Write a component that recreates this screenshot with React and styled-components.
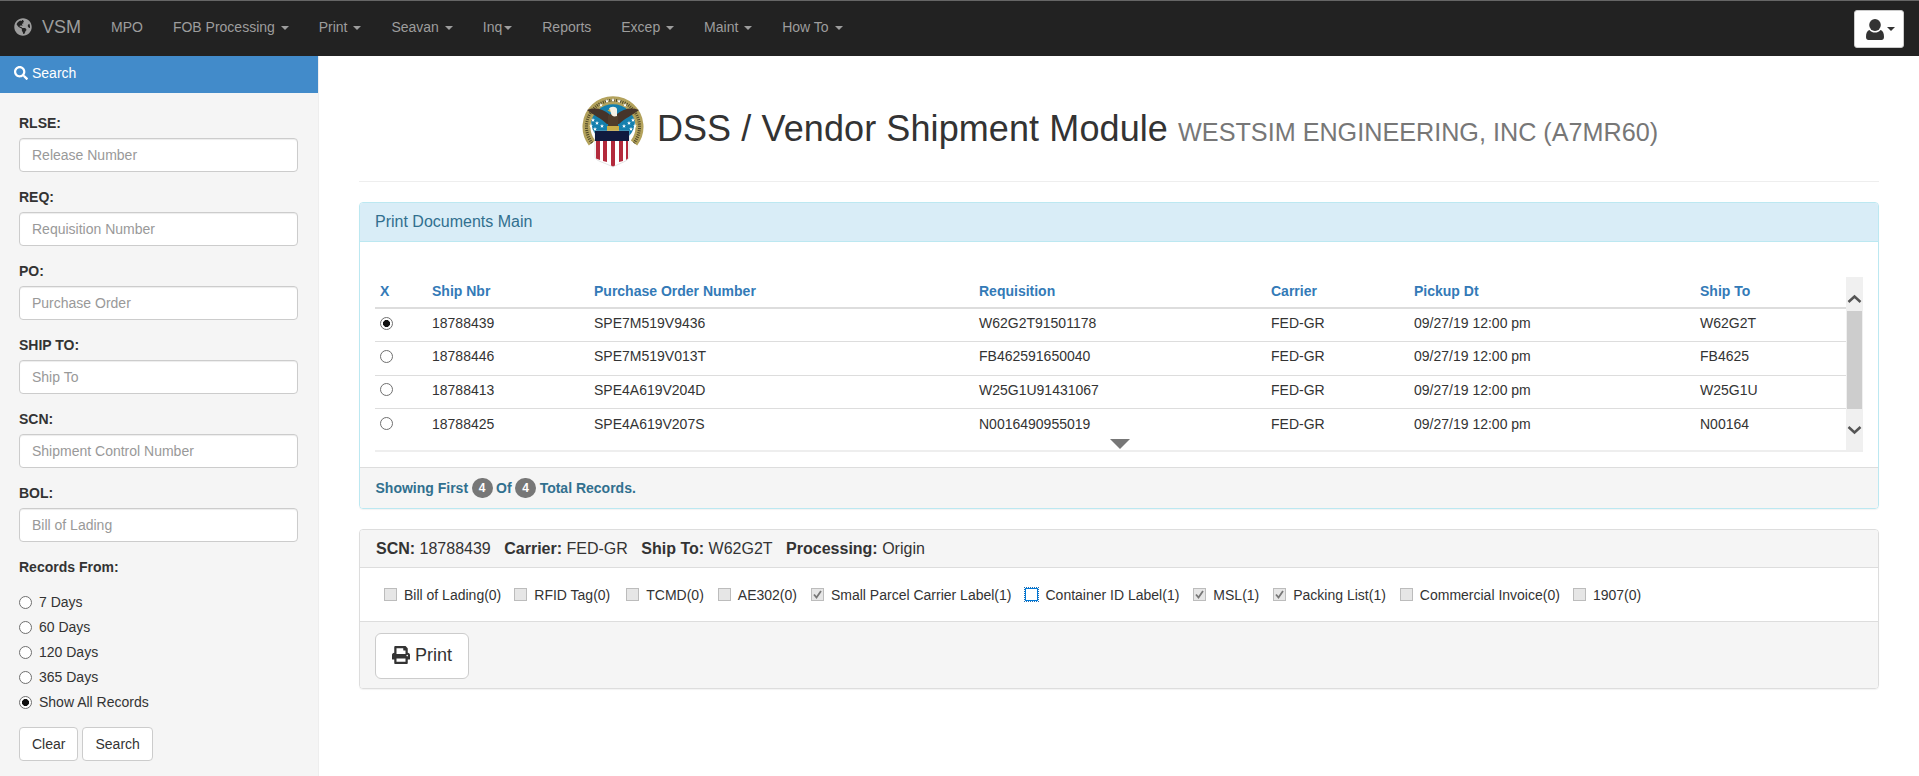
import React from "react";
import styled, { createGlobalStyle } from "styled-components";
import { FaGlobeAmericas, FaSearch, FaPrint } from "react-icons/fa";

const Global = createGlobalStyle`
  * { box-sizing: border-box; }
  html, body { margin: 0; height: 100%; overflow: hidden; }
  body { font-family: "Liberation Sans", Arial, sans-serif; font-size: 14px; line-height: 20px; color: #333; background: #fff; }
`;

const Page = styled.div`display:flex;flex-direction:column;height:776px;`;
const Navbar = styled.nav`
  height:56px;flex:none;background:#222;border-top:1px solid #666;display:flex;align-items:center;padding-right:15px;color:#9d9d9d;
`;
const Brand = styled.a`
  width:96px;padding:0 0 3px 14px;display:flex;align-items:center;gap:10px;font-size:18px;color:#9d9d9d;
  svg{width:18px;height:18px;flex:none;}
`;
const NavItem = styled.a`padding:0 15px 3px;white-space:nowrap;color:#9d9d9d;`;
const Caret = styled.span`
  display:inline-block;width:0;height:0;margin-left:${p => p.$gap || 2}px;vertical-align:middle;
  border-top:4px solid currentColor;border-left:4px solid transparent;border-right:4px solid transparent;
`;
const UserButton = styled.button`
  margin-left:auto;width:50px;height:38px;margin-top:1px;background:#fff;border:1px solid #ccc;border-radius:3px;color:#333;padding:0 0 0 2px;
  display:flex;align-items:center;justify-content:center;
  svg{width:18px;height:21px;}
`;
const Content = styled.div`display:flex;flex:1;min-height:0;`;
const Sidebar = styled.aside`width:319px;flex:none;background:#f5f5f5;border-right:1px solid #eee;`;
const SideHead = styled.div`
  height:37px;background:#428bca;color:#fff;display:flex;align-items:center;padding:0 0 3px 14px;gap:4px;
  svg{width:14px;height:14px;}
`;
const SideBody = styled.form`padding:20px 20px 0 19px;`;
const Group = styled.div`margin-bottom:15px;`;
const Label = styled.label`display:block;font-weight:700;margin-bottom:${p => p.$mb || 5}px;`;
const TextInput = styled.input`
  display:block;width:279px;height:34px;padding:6px 12px;font:inherit;color:#555;background:#fff;border:1px solid #ccc;border-radius:4px;
  box-shadow:inset 0 1px 1px rgba(0,0,0,.075);
  &::placeholder{color:#999;opacity:1;}
`;
const RadioRow = styled.label`display:flex;align-items:center;height:20px;margin-bottom:5px;gap:7px;`;
const Radio = styled.input.attrs({ type: "radio" })`
  appearance:none;display:block;width:13px;height:13px;margin:0;border:1px solid #6f6f6f;border-radius:50%;background:#fff;flex:none;
  &:checked{background:radial-gradient(circle,#111 0 3.2px,#fff 3.8px);}
`;
const ButtonRow = styled.div`display:flex;gap:4px;margin-top:15px;`;
const Button = styled.button`
  height:34px;padding:6px 12px;font:inherit;color:#333;background:#fff;border:1px solid #ccc;border-radius:4px;
`;
const Main = styled.main`flex:1;padding:0 40px 0 40px;min-width:0;`;
const Header = styled.header`
  height:126px;border-bottom:1px solid #eee;display:flex;justify-content:center;align-items:flex-start;padding:37px 0 0 2px;
`;
const Seal = styled.svg`width:62px;height:75px;flex:none;margin-right:13px;`;
const Title = styled.h1`margin:16px 0 0;font-size:36px;line-height:40px;font-weight:500;white-space:nowrap;color:#333;letter-spacing:.1px;`;
const Small = styled.small`font-size:25.2px;font-weight:400;color:#777;letter-spacing:0;`;
const Panel = styled.section`
  border:1px solid ${p => p.$info ? "#bce8f1" : "#ddd"};border-radius:4px;margin-top:20px;overflow:hidden;box-shadow:0 1px 1px rgba(0,0,0,.05);
`;
const PanelHead = styled.div`
  height:${p => p.$h}px;padding:0 15px 0 ${p => p.$info ? 15 : 16}px;display:flex;align-items:center;font-size:16px;
  background:${p => p.$info ? "#d9edf7" : "#f5f5f5"};color:${p => p.$info ? "#31708f" : "#333"};
  border-bottom:1px solid ${p => p.$info ? "#bce8f1" : "#ddd"};
`;
const GridBody = styled.div`height:225px;padding:35px 15px 0;`;
const ScrollWrap = styled.div`position:relative;display:flex;height:175px;border-bottom:2px solid #eee;width:1488px;`;
const Table = styled.table`width:1471px;border-collapse:collapse;table-layout:fixed;align-self:flex-start;`;
const Th = styled.th`
  height:31px;padding:0 8px 2px;text-align:left;font-weight:700;color:#337ab7;border-bottom:2px solid #ddd;
  width:${p => p.$w}px;
  &:first-child{padding-left:5px;}
`;
const Tr = styled.tr`&:not(:last-child) td{border-bottom:1px solid #ddd;}`;
const Td = styled.td`
  height:33.5px;padding:0 8px 4px;vertical-align:middle;
  &:first-child{padding-left:5px;}
`;
const ScrollBar = styled.div`
  width:17px;height:173px;background:#f0f0f0;display:flex;flex-direction:column;align-items:center;
  svg{width:17px;height:17px;flex:none;}
`;
const ScrollArrow = styled.div`height:${p => p.$h}px;padding-top:${p => p.$top}px;color:#555;`;
const Thumb = styled.div`width:15px;height:98px;background:#cdcdcd;`;
const More = styled.div`
  position:absolute;left:735px;top:162px;width:0;height:0;border-top:10px solid #777;border-left:10px solid transparent;border-right:10px solid transparent;
`;
const FootInfo = styled.div`
  height:41px;padding:0 15.500px;background:#f5f5f5;border-top:1px solid #ddd;display:flex;align-items:center;gap:3.500px;font-weight:700;color:#31708f;
`;
const Badge = styled.span`
  min-width:21px;height:20px;border-radius:10px;background:#777;color:#fff;font-size:12px;line-height:20px;text-align:center;
`;
const Facts = styled.div`display:flex;gap:13.500px;white-space:nowrap;b{font-weight:700;}`;
const Docs = styled.div`height:53px;padding-left:24px;display:flex;align-items:center;`;
const Doc = styled.label`display:flex;align-items:center;white-space:nowrap;margin-right:${p => p.$mr}px;`;
const Box = styled.span`
  width:13px;height:13px;margin-right:7px;flex:none;display:flex;align-items:center;justify-content:center;
  background:${p => p.$focus ? "#fff" : "#e6e6e6"};
  border:1px solid ${p => p.$focus ? "#0078d7" : "#bcbcbc"};
  outline:${p => p.$focus ? "1px dotted #1f6fb5" : "none"};outline-offset:0;
  svg{width:11px;height:11px;}
`;
const PanelFoot = styled.div`height:67px;padding:11px 15px 0;background:#f5f5f5;border-top:1px solid #ddd;`;
const PrintButton = styled.button`
  width:94px;height:46px;font:inherit;font-size:18px;color:#333;background:#fff;border:1px solid #ccc;border-radius:6px;
  display:flex;align-items:center;justify-content:center;gap:5px;padding:0 0 2px;
  svg{width:18px;height:18px;}
`;

const columns = [["X", 49], ["Ship Nbr", 162], ["Purchase Order Number", 385], ["Requisition", 292], ["Carrier", 143], ["Pickup Dt", 286], ["Ship To", 154]];
const rows = [
  ["18788439", "SPE7M519V9436", "W62G2T91501178", "W62G2T"],
  ["18788446", "SPE7M519V013T", "FB462591650040", "FB4625"],
  ["18788413", "SPE4A619V204D", "W25G1U91431067", "W25G1U"],
  ["18788425", "SPE4A619V207S", "N0016490955019", "N00164"],
];
const fields = [
  ["RLSE:", "Release Number"], ["REQ:", "Requisition Number"], ["PO:", "Purchase Order"],
  ["SHIP TO:", "Ship To"], ["SCN:", "Shipment Control Number"], ["BOL:", "Bill of Lading"],
];
const docs = [
  ["Bill of Lading(0)", 0, 13], ["RFID Tag(0)", 0, 16], ["TCMD(0)", 0, 14], ["AE302(0)", 0, 14],
  ["Small Parcel Carrier Label(1)", 1, 14], ["Container ID Label(1)", 2, 14], ["MSL(1)", 1, 14],
  ["Packing List(1)", 1, 14], ["Commercial Invoice(0)", 0, 13], ["1907(0)", 0, 0],
];
const navs = [["MPO"], ["FOB Processing", 1], ["Print", 1], ["Seavan", 1], ["Inq", 2], ["Reports"], ["Excep", 1], ["Maint", 1], ["How To", 1]];

const starPath = "M0-2L.6-.6 2-.6 .9 .3 1.300 1.800 0 .9-1.300 1.800-.9 .3-2-.6-.6-.6Z";
const stars = [[19, 12], [25, 8], [31, 7], [37, 8], [43, 12], [11, 27], [9, 33], [15, 30], [13, 36], [51, 27], [53, 33], [47, 30], [49, 36], [20, 33], [42, 33]];

const SealArt = () => (
  <Seal viewBox="0 0 62 75">
    <circle cx="31" cy="28" r="22" fill="#1580ae" />
    <path d="M10 50A26.500 26.500 0 1 1 52 50" fill="none" stroke="#b3a25c" strokeWidth="8" />
    <path d="M10 50A26.500 26.500 0 1 1 52 50" fill="none" stroke="#4d4628" strokeWidth="3" strokeDasharray="1 1.200" />
    <g fill="#fff">
      {stars.map(([x, y]) => <path key={x + "-" + y} d={starPath} transform={`translate(${x} ${y})`} />)}
    </g>
    <path d="M5 17C13 14 21 16 27 21L28 31L25 31C19 25 11 22 5 17ZM57 17C49 14 41 16 35 21L34 31L37 31C43 25 51 22 57 17Z" fill="#46342a" />
    <path d="M26 23C27 20 35 20 36 23L36 33L31 37L26 33Z" fill="#4f3c2b" />
    <path d="M27 16C28 13 34 13 35 16L35 23C32 24 29 23 29 20Z" fill="#f4f1e6" />
    <path d="M25.500 17.500L28 16L28.500 19Z" fill="#d6b23c" />
    <path d="M25 33H37V38H25Z" fill="#c9ad48" />
    <path d="M13 38H47V64C47 68 38 70 31 74C24 70 13 68 13 64Z" fill="#fff" stroke="#c9c9c9" strokeWidth=".5" />
    <path d="M13 38H47V48H13Z" fill="#101a3e" />
    <g fill="#b32a3c">
      <path d="M14 48H18V67L14 65.500Z" />
      <path d="M21 48H25V69L21 68Z" />
      <path d="M29 48H33V72.500L31 73.500L29 72.500Z" />
      <path d="M37 48H41V68L37 69Z" />
      <path d="M44 48H46V65.500L44 67Z" />
    </g>
  </Seal>
);

const UserGlyph = () => (
  <svg viewBox="0 0 18 21" fill="currentColor">
    <ellipse cx="9" cy="6" rx="5.800" ry="6" />
    <path d="M3.500 11C5 13 7 13.500 9 13.500C11 13.500 13 13 14.500 11C16.800 11.500 18 14 18 18C18 20 17 21 15.500 21H2.500C1 21 0 20 0 18C0 14 1.200 11.500 3.500 11Z" />
  </svg>
);
const CheckMark = () => (
  <svg viewBox="0 0 11 11"><path d="M2 5.500L4.500 8.500L9 2" fill="none" stroke="#777" strokeWidth="1.800" /></svg>
);
const Chevron = ({ up }) => (
  <svg viewBox="0 0 17 17"><path d={up ? "M2.500 11L8.500 5.500L14.500 11" : "M2.500 6L8.500 11.500L14.500 6"} fill="none" stroke="#555" strokeWidth="2.500" /></svg>
);

export default function App() {
  return (
    <Page>
      <Global />
      <Navbar>
        <Brand><FaGlobeAmericas />VSM</Brand>
        {navs.map(([t, c]) => (
          <NavItem key={t}>{t}{c === 1 && " "}{c && <Caret $gap={c === 1 ? 2 : 0} />}</NavItem>
        ))}
        <UserButton aria-label="User"><UserGlyph /><Caret $gap={3} /></UserButton>
      </Navbar>
      <Content>
        <Sidebar>
          <SideHead><FaSearch />Search</SideHead>
          <SideBody>
            {fields.map(([l, p]) => (
              <Group key={l}><Label>{l}</Label><TextInput placeholder={p} /></Group>
            ))}
            <Label $mb={15}>Records From:</Label>
            {["7 Days", "60 Days", "120 Days", "365 Days", "Show All Records"].map((t, i) => (
              <RadioRow key={t}><Radio name="days" defaultChecked={i === 4} />{t}</RadioRow>
            ))}
            <ButtonRow><Button type="button">Clear</Button><Button type="button">Search</Button></ButtonRow>
          </SideBody>
        </Sidebar>
        <Main>
          <Header>
            <SealArt />
            <Title>DSS / Vendor Shipment Module <Small>WESTSIM ENGINEERING, INC (A7MR60)</Small></Title>
          </Header>
          <Panel $info>
            <PanelHead $info $h={39}>Print Documents Main</PanelHead>
            <GridBody>
              <ScrollWrap>
                <Table>
                  <thead><tr>{columns.map(([t, w]) => <Th key={t} $w={w}>{t}</Th>)}</tr></thead>
                  <tbody>
                    {rows.map((r, i) => (
                      <Tr key={r[0]}>
                        <Td><Radio name="ship" defaultChecked={i === 0} /></Td>
                        <Td>{r[0]}</Td><Td>{r[1]}</Td><Td>{r[2]}</Td><Td>FED-GR</Td><Td>09/27/19 12:00 pm</Td><Td>{r[3]}</Td>
                      </Tr>
                    ))}
                  </tbody>
                </Table>
                <ScrollBar>
                  <ScrollArrow $h={34} $top={13.5}><Chevron up /></ScrollArrow>
                  <Thumb />
                  <ScrollArrow $h={41} $top={11.5}><Chevron /></ScrollArrow>
                </ScrollBar>
                <More />
              </ScrollWrap>
            </GridBody>
            <FootInfo>Showing First <Badge>4</Badge> Of <Badge>4</Badge> Total Records.</FootInfo>
          </Panel>
          <Panel>
            <PanelHead $h={38}>
              <Facts>
                <span><b>SCN:</b> 18788439</span><span><b>Carrier:</b> FED-GR</span>
                <span><b>Ship To:</b> W62G2T</span><span><b>Processing:</b> Origin</span>
              </Facts>
            </PanelHead>
            <Docs>
              {docs.map(([t, s, mr]) => (
                <Doc key={t} $mr={mr}><Box $focus={s === 2}>{s === 1 && <CheckMark />}</Box>{t}</Doc>
              ))}
            </Docs>
            <PanelFoot><PrintButton><FaPrint />Print</PrintButton></PanelFoot>
          </Panel>
        </Main>
      </Content>
    </Page>
  );
}
